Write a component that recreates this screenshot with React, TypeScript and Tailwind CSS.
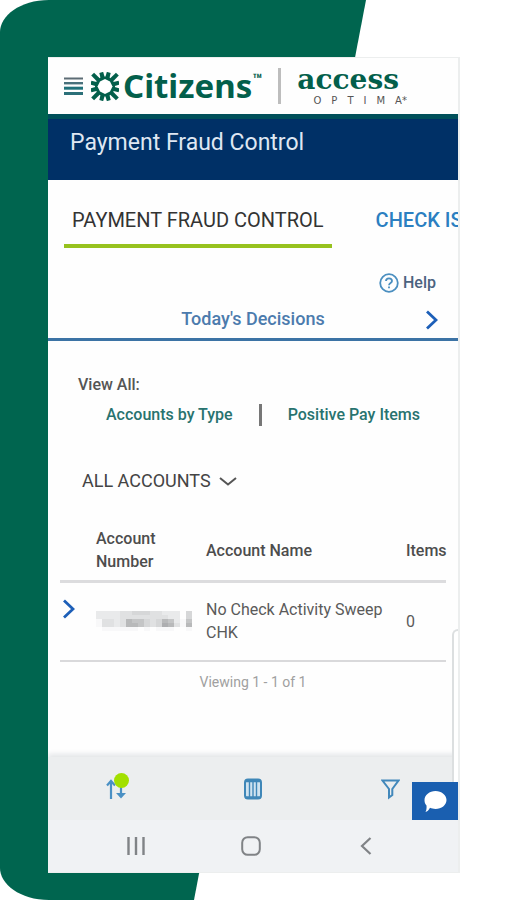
const accounts = [{ id: 'sweep', name: 'No Check Activity Sweep CHK', items: 0 }];

// Shades of the masked account number, one string per row of blocks
const maskRows = ['2222334443322204', '2222333333332204', '1332376643476216', '1332377643487317', '0111111010111001'];

const maskShades: Record<string, string> = {
  '0': '#fefefe',
  '1': '#f8f8f9',
  '2': '#e9eaeb',
  '3': '#e0e1e2',
  '4': '#d6d7d8',
  '6': '#c4c5c6',
  '7': '#b8b9ba',
  '8': '#adaeb0',
};

function Backdrop() {
  return (
    <svg
      className="absolute inset-0 -z-10 h-full w-full"
      viewBox="0 0 506 900"
      preserveAspectRatio="none"
      aria-hidden="true"
    >
      <path d="M366 0H49C20 0 0 16 0 32V868C0 884 20 900 49 900H194Z" fill="#00654f" />
    </svg>
  );
}

function CitizensMark() {
  const rays = Array.from({ length: 12 }, (_, i) => i * 30 + 15);
  return (
    <svg width="28" height="29" viewBox="-14 -14 28 28" aria-hidden="true">
      {rays.map((angle) => (
        <path
          key={angle}
          d={angle % 90 === 45 ? 'M-2.2-6L-2-17.5H2L2.2-6Z' : 'M-2.2-6L-2-14.6H2L2.2-6Z'}
          fill="#035f4b"
          transform={`rotate(${angle})`}
        />
      ))}
      <circle r="10" fill="#035f4b" />
      <path d="M0-7.5L5-5L7.5 0L5 5L0 7.5L-5 5L-7.5 0L-5-5Z" fill="white" />
    </svg>
  );
}

function Chevron({ className }: { className?: string }) {
  return (
    <svg className={className} width="13" height="20" viewBox="0 0 13 20" fill="none" aria-hidden="true">
      <path d="M2 1.5L11 10L2 18.5" stroke="#1d5fb8" strokeWidth="2.8" />
    </svg>
  );
}

function BrandBar() {
  return (
    <header className="flex h-14 items-center pl-4">
      <button type="button" aria-label="Menu" className="mr-2 shrink-0">
        <svg width="19" height="20" viewBox="0 0 19 20" aria-hidden="true">
          <path d="M0 2.5H19" stroke="#5d6c75" strokeWidth="2" />
          <path d="M0 7.2H19" stroke="#49717c" strokeWidth="2.4" />
          <path d="M0 12.2H19" stroke="#20717a" strokeWidth="3" />
          <path d="M0 17.5H19" stroke="#2c7079" strokeWidth="3" />
        </svg>
      </button>
      <a href="#home" className="flex shrink-0 items-center gap-1 text-[#035f4b]">
        <CitizensMark />
        <span className="font-['Noto_Sans',sans-serif] text-[33px] leading-8 font-bold">Citizens</span>
        <sup className="-ml-1 pt-1 text-base font-bold">™</sup>
      </a>
      <span className="mr-4 ml-4 h-9 w-[3px] shrink-0 bg-[#bdbdbd]" />
      <div className="flex shrink-0 flex-col pt-1 pb-0.5">
        <span className="font-['DejaVu_Serif',serif] text-[28px] leading-6 font-bold text-[#035f4b]">access</span>
        <span className="-mr-2 flex gap-2.5 self-end pt-1 font-['DejaVu_Sans',sans-serif] text-[10px] leading-[10px] text-[#555]">
          <span>O</span>
          <span>P</span>
          <span>T</span>
          <span>I</span>
          <span>M</span>
          <span>A*</span>
        </span>
      </div>
    </header>
  );
}

function Tabs() {
  return (
    <nav className="flex gap-9 overflow-hidden pt-6 pl-4 text-xl leading-8 whitespace-nowrap">
      <a href="#fraud" aria-current="page" className="border-b-4 border-[#97c21e] px-2 pb-2 text-[#333]">
        PAYMENT FRAUD CONTROL
      </a>
      <a href="#issues" className="px-2 font-medium text-[#2b7fc1]">
        CHECK IS
      </a>
    </nav>
  );
}

function MaskedNumber() {
  return (
    <svg width="96" height="20" viewBox="0 0 16 5" preserveAspectRatio="none" role="img" aria-label="Masked account number">
      {maskRows.map((row, y) =>
        row.split('').map((shade, x) => (
          <rect key={`${x}-${y}`} x={x} y={y} width="1.05" height="1.05" fill={maskShades[shade]} />
        ))
      )}
    </svg>
  );
}

function AccountsTable() {
  return (
    <table className="w-full table-fixed border-collapse text-left text-base leading-[23px] text-[#5a5a5a]">
      <colgroup>
        <col className="w-9" />
        <col className="w-[110px]" />
        <col />
        <col className="w-10" />
      </colgroup>
      <thead>
        <tr className="h-14 border-b-[3px] border-[#dcdcde] text-[#4d4d4d]">
          <th />
          <th className="pr-6 pb-1 font-medium">Account Number</th>
          <th className="pb-1 font-medium">Account Name</th>
          <th className="pb-1 font-medium">Items</th>
        </tr>
      </thead>
      <tbody>
        {accounts.map((account) => (
          <tr key={account.id} className="h-20 border-b-2 border-[#d9d9db]">
            <td className="pt-4 align-top">
              <button type="button" aria-label="Expand account" className="block pl-0.5">
                <Chevron />
              </button>
            </td>
            <td>
              <MaskedNumber />
            </td>
            <td>{account.name}</td>
            <td>{account.items}</td>
          </tr>
        ))}
      </tbody>
    </table>
  );
}

function Toolbar() {
  return (
    <div className="flex h-[63px] items-center justify-between bg-[#eceeef] px-[58px] shadow-[0_-3px_5px_#e4e6e8]">
      <button type="button" aria-label="Sort" className="relative">
        <svg width="22" height="24" viewBox="0 0 22 24" fill="none" stroke="#4a90c4" strokeWidth="2.2" aria-hidden="true">
          <path d="M5 22V5M1 8.5L5 4L9 8.5M15 6V19" />
          <path d="M10 16H20L15 21.5Z" fill="#4a90c4" stroke="none" />
        </svg>
        <span className="absolute -top-1 left-2 size-[15px] rounded-full bg-[#a2e000]" />
      </button>
      <button type="button" aria-label="Columns" className="pr-1">
        <svg width="18" height="22" viewBox="0 0 18 22" fill="none" stroke="#3f87b8" aria-hidden="true">
          <rect x="1" y="1.5" width="16" height="19" rx="3" fill="#cfe3f0" strokeWidth="2" />
          <path d="M1.5 3H16.5M1.5 19.5H16.5" strokeWidth="2.5" />
          <path d="M5.5 3V19M9 3V19M12.5 3V19" strokeWidth="1.4" />
        </svg>
      </button>
      <button type="button" aria-label="Filter">
        <svg width="19" height="22" viewBox="0 0 19 22" fill="none" stroke="#4288bb" strokeWidth="2" aria-hidden="true">
          <path d="M1.5 2.5H17.5L11.3 11V17L8 19.5V11Z" />
        </svg>
      </button>
    </div>
  );
}

function SystemNav() {
  return (
    <div className="flex h-[52px] items-center justify-between bg-[#f0f2f4] pr-[86px] pl-[79px] text-[#808386]">
      <button type="button" aria-label="Recent apps">
        <svg width="18" height="18" viewBox="0 0 18 18" stroke="currentColor" strokeWidth="2.4" aria-hidden="true">
          <path d="M1.5 0V18M9 0V18M16.5 0V18" />
        </svg>
      </button>
      <button type="button" aria-label="Home" className="pr-1">
        <svg width="20" height="20" viewBox="0 0 20 20" fill="none" stroke="currentColor" strokeWidth="2" aria-hidden="true">
          <rect x="1.2" y="1.2" width="17.6" height="17.6" rx="5.5" />
        </svg>
      </button>
      <button type="button" aria-label="Back">
        <svg width="12" height="18" viewBox="0 0 12 18" fill="none" stroke="currentColor" strokeWidth="2.2" aria-hidden="true">
          <path d="M10.5 1L2 9L10.5 17" />
        </svg>
      </button>
    </div>
  );
}

export default function App() {
  return (
    <div className="relative isolate min-h-screen bg-white px-12 pt-[58px] pb-7 font-[Roboto,sans-serif]">
      <Backdrop />
      <main className="relative bg-[#fefefe] shadow-[1px_0_0_1px_#eceeee]">
        <BrandBar />

        <div className="h-[66px] border-t-[5px] border-[#00505a] bg-[#003066] px-[22px] pt-2">
          <h1 className="text-[23px] leading-8 text-[#dfe7f2]">Payment Fraud Control</h1>
        </div>

        <Tabs />

        <div className="flex justify-end pt-[23px] pr-[22px]">
          <a href="#help" className="flex items-center gap-1 text-base leading-6 font-medium text-[#4b6380]">
            <svg width="20" height="20" viewBox="0 0 20 20" fill="none" stroke="#4b8fc0" strokeWidth="1.8" aria-hidden="true">
              <circle cx="10" cy="10" r="8.8" />
              <path d="M7 8C7 4.5 13 4.5 13 8C13 10 10 10 10 12.2M10 13.5V15.2" />
            </svg>
            Help
          </a>
        </div>

        <div className="relative flex h-[46px] items-center justify-center border-b-[3px] border-[#3c73a5] pt-1">
          <h2 className="text-lg leading-6 font-medium text-[#4c7bad]">Today&apos;s Decisions</h2>
          <button type="button" aria-label="Next" className="absolute right-5 bottom-2">
            <Chevron />
          </button>
        </div>

        <section className="pt-8 pl-[30px] text-base leading-6">
          <p className="font-medium text-[#555]">View All:</p>
          <div className="flex h-9 items-center gap-[26px] pl-7 font-medium whitespace-nowrap text-[#28736f]">
            <a href="#types">Accounts by Type</a>
            <span className="h-[22px] w-[3px] bg-[#777]" />
            <a href="#items">Positive Pay Items</a>
          </div>
          <button type="button" className="mt-9 flex items-center gap-2 pl-1 text-lg leading-6 text-[#444]">
            ALL ACCOUNTS
            <svg width="18" height="10" viewBox="0 0 18 10" fill="none" stroke="#555" strokeWidth="2" aria-hidden="true">
              <path d="M1 2L9 8.5L17 2" />
            </svg>
          </button>
        </section>

        <section className="px-3 pt-8">
          <AccountsTable />
          <p className="pt-2 pb-[63px] text-center text-sm leading-6 text-[#a0a0a0]">Viewing 1 - 1 of 1</p>
        </section>

        <div className="relative">
          <div className="-mt-2 overflow-hidden pt-2">
            <Toolbar />
          </div>
          <div className="absolute right-0 bottom-[38px] h-[153px] w-1.5 rounded-tl-md border-t-2 border-l-2 border-[#dcdfe0] bg-white" />
          <button
            type="button"
            aria-label="Chat"
            className="absolute right-0 bottom-0 flex h-[38px] w-[46px] items-center justify-center bg-[#1a5fb0]"
          >
            <svg width="24" height="24" viewBox="0 0 24 24" fill="white" aria-hidden="true">
              <path d="M12.5 2C18.5 2 23.5 6 23.5 11S18.5 20 12.5 20C10.5 20 8.5 19.5 7 18.8C6 21 4 23 2.5 23C3.3 21.5 3.8 19 3.5 16.5C2 15 1.5 13 1.5 11C1.5 6 6.5 2 12.5 2Z" />
            </svg>
          </button>
        </div>

        <SystemNav />
      </main>
    </div>
  );
}
